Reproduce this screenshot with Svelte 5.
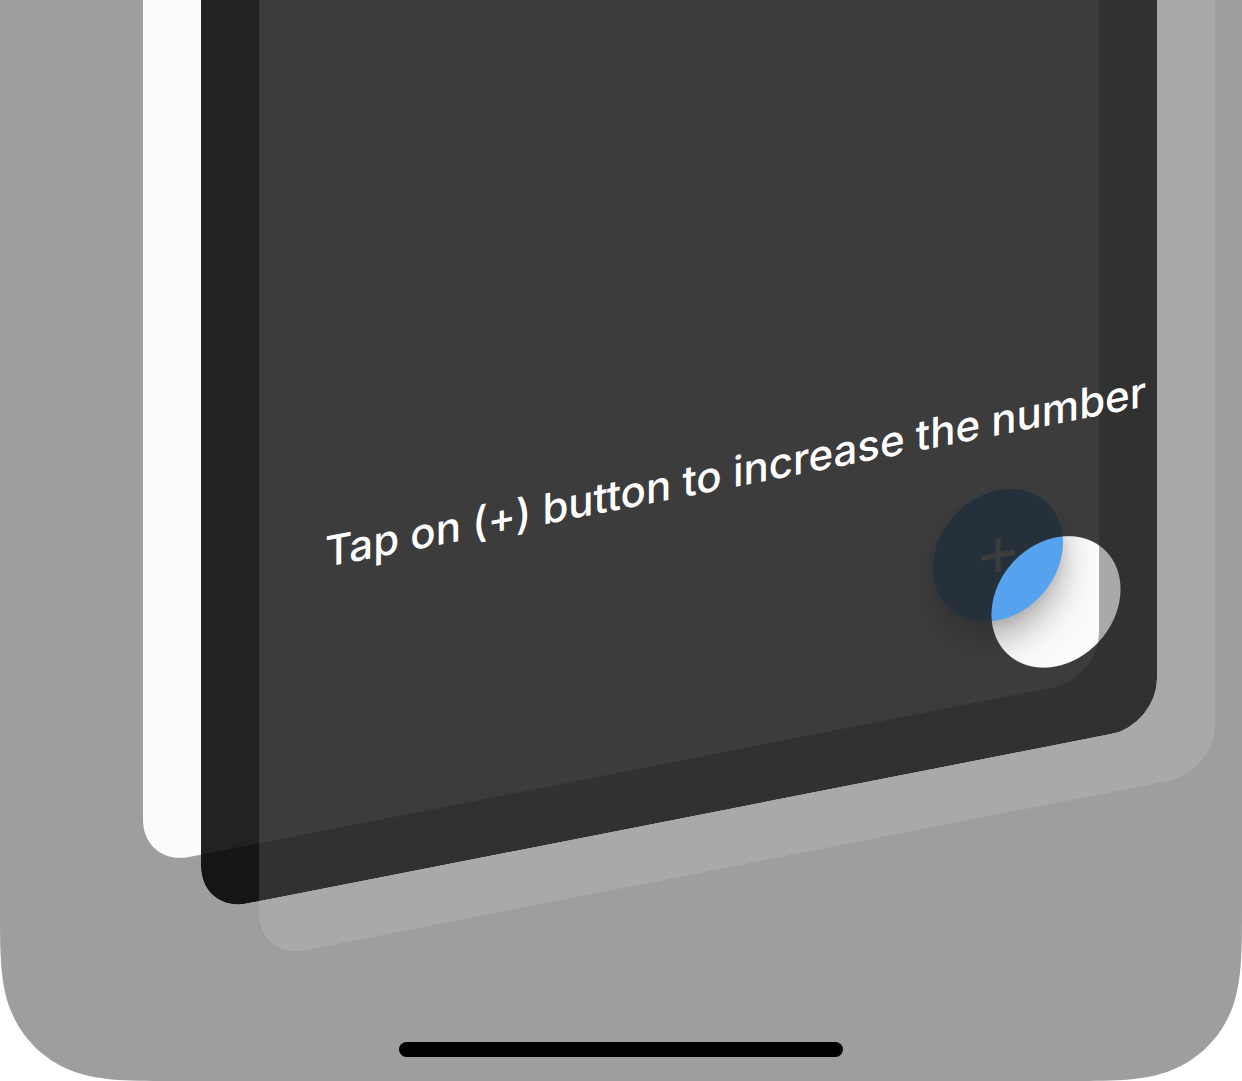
<script>
  let count = $state(0);
</script>

<main class="screen">
  <div class="stage">
    <section class="layer page">
      <button class="fab" aria-label="Increase the number, now {count}" onclick={() => (count += 1)}>
        <svg viewBox="0 0 34 34" aria-hidden="true">
          <path d="M17 0V34M0 17H34" />
        </svg>
      </button>
    </section>
    <div class="layer scrim"></div>
    <section class="layer hint">
      <p>Tap on (+) button to increase the number</p>
    </section>
  </div>

  <svg class="corner left" viewBox="0 0 180 180" aria-hidden="true">
    <path d="M180 180C128 180 102 180 75 171C44 160 20 136 9 105C0 78 0 52 0 0V180Z" />
  </svg>
  <svg class="corner right" viewBox="0 0 180 180" aria-hidden="true">
    <path d="M180 180C128 180 102 180 75 171C44 160 20 136 9 105C0 78 0 52 0 0V180Z" />
  </svg>
  <div class="home-bar"></div>
</main>

<style>
  :global(body) {
    background: #fff;
  }

  .screen {
    position: relative;
    display: flex;
    flex-direction: column;
    height: 100vh;
    overflow: hidden;
    background: #9e9e9e;
    font-family: Inter, "Liberation Sans", sans-serif;
  }

  .stage {
    position: relative;
    flex: 1;
    margin: 0 143px 176px;
    transform: skewY(-11.1deg);
    transform-origin: left bottom;
  }

  .layer {
    position: absolute;
    inset: -400px 0 0;
    box-sizing: border-box;
    display: flex;
    align-items: flex-end;
    border-radius: 46px;
  }

  .page {
    justify-content: flex-end;
    padding: 0 36px 78px 0;
    overflow: hidden;
    background: #fbfbfb;
  }

  .scrim {
    translate: 58px 58px;
    background: rgb(0 0 0 / 0.868);
    pointer-events: none;
    mask-image: radial-gradient(
      circle at calc(100% - 101px) calc(100% - 143px),
      transparent 64px,
      #000 65px
    );
  }

  .hint {
    translate: 116px 116px;
    padding: 0 0 370px 66px;
    background: rgb(255 255 255 / 0.12);
    pointer-events: none;
  }

  .hint p {
    margin: 0;
    color: #fff;
    font-size: 42px;
    font-weight: 500;
    line-height: 48px;
    white-space: nowrap;
  }

  .fab {
    display: grid;
    place-items: center;
    width: 130px;
    height: 130px;
    padding: 0;
    border: 0;
    border-radius: 50%;
    background: #4096ec;
    box-shadow:
      0 4px 10px rgb(0 0 0 / 0.08),
      0 18px 36px rgb(0 0 0 / 0.36);
    cursor: pointer;
  }

  .fab svg {
    width: 34px;
    height: 34px;
    fill: none;
    stroke: #fafafa;
    stroke-width: 5;
  }

  .corner {
    position: absolute;
    bottom: 0;
    width: 180px;
    height: 180px;
    fill: #fff;
  }

  .left {
    left: 0;
  }

  .right {
    right: 0;
    transform: scaleX(-1);
  }

  .home-bar {
    width: 444px;
    height: 15px;
    margin: 0 auto 24px;
    border-radius: 8px;
    background: #000;
  }
</style>
